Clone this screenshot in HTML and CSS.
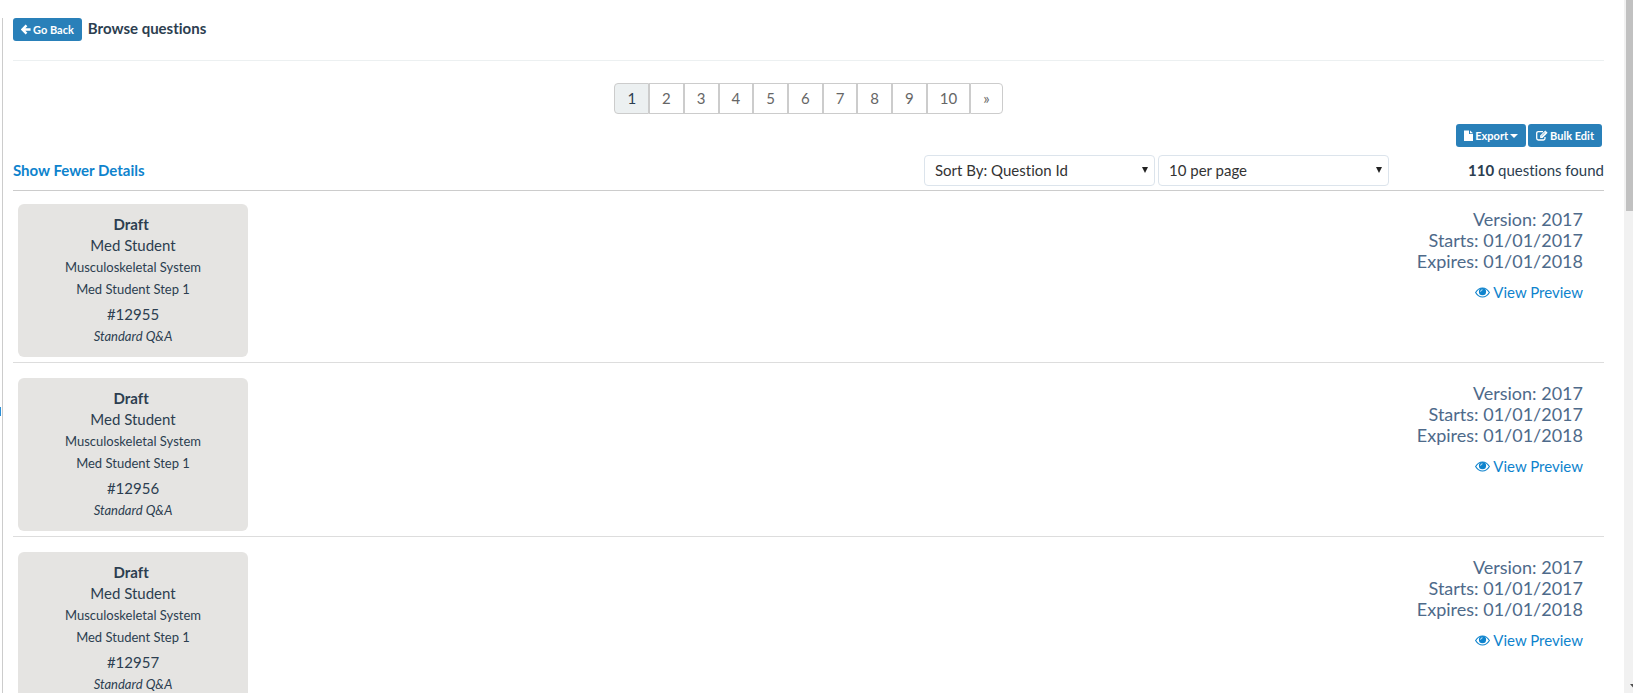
FILE: index.html
```html
<!DOCTYPE html>
<html lang="en">
<head>
    <meta charset="UTF-8">
    <meta name="viewport" content="width=device-width, initial-scale=1.0">
    <title>Browse questions</title>
    <link rel="stylesheet" href="styles.css">
</head>
<body>
    <div class="side-tab"></div>
    <main class="content">
        <header class="page-header">
            <button type="button" class="btn">
                <svg class="icon" width="10" height="11" viewBox="0 0 10 11"><path d="M5.5 1.3L1.5 5.5l4 4.2M2 5.5h7.6" fill="none" stroke="#fff" stroke-width="2.4"/></svg>
                Go Back
            </button>
            <h1>Browse questions</h1>
        </header>

        <nav class="pagination" aria-label="Pages">
            <a class="active" href="#">1</a>
            <a href="#">2</a>
            <a href="#">3</a>
            <a href="#">4</a>
            <a href="#">5</a>
            <a href="#">6</a>
            <a href="#">7</a>
            <a href="#">8</a>
            <a href="#">9</a>
            <a href="#">10</a>
            <a href="#">»</a>
        </nav>

        <div class="actions">
            <button type="button" class="btn">
                <svg class="icon" width="9" height="11" viewBox="0 0 9 11"><path d="M0 .5h5V4h4v7H0z" fill="#fff"/><path d="M6 .5L9 3.2H6z" fill="#fff"/></svg>
                Export
                <svg class="caret" width="8" height="4" viewBox="0 0 8 4"><path d="M0 0h8L4 4z" fill="#fff"/></svg>
            </button>
            <button type="button" class="btn">
                <svg class="icon" width="12" height="11" viewBox="0 0 12 11"><path d="M7 1.6H2.4Q.7 1.6.7 3.3v5Q.7 10 2.4 10h5Q9 10 9 8.3V7" fill="none" stroke="#fff" stroke-width="1.3"/><path d="M4.2 5.6L9.3.5l2.3 2.3-5.1 5.1H4.2z" fill="#fff"/><path d="M5.4 6.2l3.9-3.9" stroke="#2980b9" stroke-width=".6"/></svg>
                Bulk Edit
            </button>
        </div>

        <div class="toolbar">
            <a class="toggle" href="#">Show Fewer Details</a>
            <div class="filters">
                <div class="select">
                    <select aria-label="Sort by">
                        <option>Sort By: Question Id</option>
                    </select>
                    <svg width="6" height="6" viewBox="0 0 6 6"><path d="M0 0h6L3 6z" fill="#222"/></svg>
                </div>
                <div class="select">
                    <select aria-label="Questions per page">
                        <option>10 per page</option>
                    </select>
                    <svg width="6" height="6" viewBox="0 0 6 6"><path d="M0 0h6L3 6z" fill="#222"/></svg>
                </div>
            </div>
            <div class="count"><strong>110</strong> questions found</div>
        </div>

        <div class="question">
            <div class="card">
                <div class="status">Draft&nbsp;</div>
                <div>Med Student</div>
                <div class="small">Musculoskeletal System</div>
                <div class="small">Med Student Step 1</div>
                <div class="number">#12955</div>
                <div class="kind">Standard Q&amp;A</div>
            </div>
            <div class="info">
                <div>Version: 2017</div>
                <div>Starts: 01/01/2017</div>
                <div>Expires: 01/01/2018</div>
                <a class="preview" href="#"><svg width="15" height="11" viewBox="0 0 15 11"><path d="M.6 5.5Q3.3 1 7.5 1t6.9 4.5Q11.7 10 7.5 10T.6 5.5z" fill="none" stroke="#0e83cd" stroke-width="1.1"/><circle cx="7.5" cy="4.7" r="3.6" fill="#0e83cd"/><path d="M5.6 4.7q0-1.9 1.9-1.9" fill="none" stroke="#fff" stroke-width=".8"/></svg>View Preview</a>
            </div>
        </div>

        <div class="question">
            <div class="card">
                <div class="status">Draft&nbsp;</div>
                <div>Med Student</div>
                <div class="small">Musculoskeletal System</div>
                <div class="small">Med Student Step 1</div>
                <div class="number">#12956</div>
                <div class="kind">Standard Q&amp;A</div>
            </div>
            <div class="info">
                <div>Version: 2017</div>
                <div>Starts: 01/01/2017</div>
                <div>Expires: 01/01/2018</div>
                <a class="preview" href="#"><svg width="15" height="11" viewBox="0 0 15 11"><path d="M.6 5.5Q3.3 1 7.5 1t6.9 4.5Q11.7 10 7.5 10T.6 5.5z" fill="none" stroke="#0e83cd" stroke-width="1.1"/><circle cx="7.5" cy="4.7" r="3.6" fill="#0e83cd"/><path d="M5.6 4.7q0-1.9 1.9-1.9" fill="none" stroke="#fff" stroke-width=".8"/></svg>View Preview</a>
            </div>
        </div>

        <div class="question">
            <div class="card">
                <div class="status">Draft&nbsp;</div>
                <div>Med Student</div>
                <div class="small">Musculoskeletal System</div>
                <div class="small">Med Student Step 1</div>
                <div class="number">#12957</div>
                <div class="kind">Standard Q&amp;A</div>
            </div>
            <div class="info">
                <div>Version: 2017</div>
                <div>Starts: 01/01/2017</div>
                <div>Expires: 01/01/2018</div>
                <a class="preview" href="#"><svg width="15" height="11" viewBox="0 0 15 11"><path d="M.6 5.5Q3.3 1 7.5 1t6.9 4.5Q11.7 10 7.5 10T.6 5.5z" fill="none" stroke="#0e83cd" stroke-width="1.1"/><circle cx="7.5" cy="4.7" r="3.6" fill="#0e83cd"/><path d="M5.6 4.7q0-1.9 1.9-1.9" fill="none" stroke="#fff" stroke-width=".8"/></svg>View Preview</a>
            </div>
        </div>
    </main>
    <div class="scrollbar">
        <div class="thumb"></div>
        <svg class="scroll-down" width="7" height="4" viewBox="0 0 7 4"><path d="M0 0h7L3.5 4z" fill="#505050"/></svg>
    </div>
</body>
</html>
```
FILE: styles.css
```css
* {
    box-sizing: border-box;
}
body {
    display: flex;
    height: 100vh;
    margin: 0;
    overflow: hidden;
    font-family: Lato, sans-serif;
    font-size: 15px;
    font-variant-ligatures: none;
    line-height: 21px;
    color: #2c3e50;
    background: #fff;
}
a {
    color: #0e83cd;
    text-decoration: none;
}
.side-tab {
    position: absolute;
    left: 0;
    top: 407px;
    width: 1px;
    height: 9px;
    background: #2a8fd6;
}
.content {
    flex: 1;
    margin: 18px 20px 0 2px;
    padding-left: 10px;
    border-left: 1px solid #ccc;
}
.page-header {
    display: flex;
    gap: 6px;
    padding-bottom: 19px;
    border-bottom: 1px solid #ecf0f1;
}
h1 {
    margin: 0;
    font-size: 15px;
    line-height: 21px;
}
.btn {
    display: flex;
    align-items: center;
    gap: 2px;
    height: 23px;
    padding: 0 8px;
    border: 0;
    border-radius: 3px;
    font-family: inherit;
    font-size: 11px;
    font-weight: bold;
    color: #fff;
    background: #2980b9;
    cursor: pointer;
}
.btn:hover {
    background: #20638f;
}
.pagination {
    display: flex;
    justify-content: center;
    margin-top: 22px;
}
.pagination a {
    padding: 4px 12px;
    border: 1px solid #ccc;
    color: #666;
}
.pagination a:first-child {
    border-radius: 4px 0 0 4px;
}
.pagination a:last-child {
    border-radius: 0 4px 4px 0;
}
.pagination .active {
    color: #2c3e50;
    background: #ecf0f1;
}
.actions {
    display: flex;
    justify-content: flex-end;
    gap: 2px;
    margin-top: 10px;
    padding-right: 2px;
}
.toolbar {
    display: flex;
    align-items: center;
    height: 44px;
    padding-top: 4px;
    border-bottom: 1px solid #ccc;
}
.toggle {
    flex: 1;
    font-weight: bold;
}
.filters {
    display: flex;
    gap: 3px;
}
.select {
    position: relative;
    width: 231px;
}
.select select {
    display: block;
    width: 100%;
    height: 31px;
    padding: 0 10px 2px;
    border: 1px solid #dce4ec;
    border-radius: 4px;
    appearance: none;
    font-family: inherit;
    font-size: 15px;
    font-variant-ligatures: none;
    color: #333;
    background: #fff;
}
.select svg {
    position: absolute;
    right: 7px;
    top: 12px;
    pointer-events: none;
}
.count {
    width: 215px;
    text-align: right;
}
.question {
    display: flex;
    justify-content: space-between;
    padding: 15px 21px 5px 5px;
    border-bottom: 1px solid #ddd;
}
.toolbar + .question {
    padding-top: 13px;
}
.card {
    width: 230px;
    height: 153px;
    padding-top: 10px;
    border-radius: 6px;
    text-align: center;
    background: #e5e4e2;
}
.status {
    font-weight: bold;
}
.small {
    font-size: 13px;
    line-height: 22px;
}
.number {
    margin-top: 4px;
}
.kind {
    font-size: 13px;
    line-height: 22px;
    font-style: italic;
}
.info {
    padding-top: 5px;
    font-size: 18px;
    text-align: right;
    color: #4e6a8a;
}
.preview {
    display: block;
    margin-top: 10px;
    font-size: 15px;
}
.preview svg {
    margin-right: 3px;
}
.scrollbar {
    display: flex;
    flex-direction: column;
    justify-content: space-between;
    width: 9px;
    padding: 0 0 5px 2px;
    overflow: hidden;
    background: #f1f1f1;
}
.thumb {
    height: 211px;
    background: #c1c1c1;
}
.scroll-down {
    flex: none;
    margin-left: 4px;
}
```
